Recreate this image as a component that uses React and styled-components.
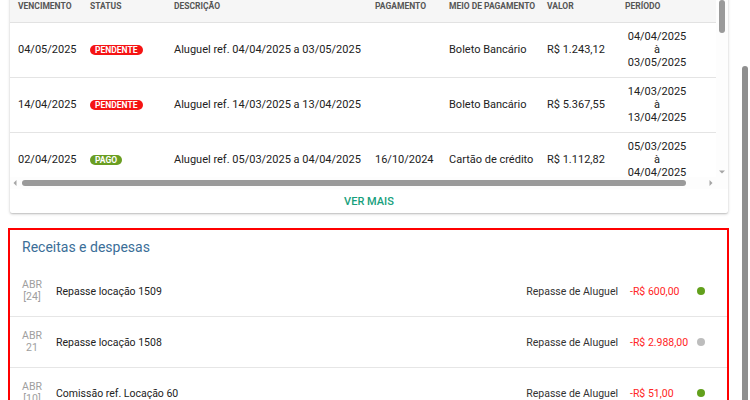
import React, { useLayoutEffect, useRef } from "react";
import styled, { createGlobalStyle } from "styled-components";

const GlobalStyle = createGlobalStyle`
  html, body { margin: 0; padding: 0; height: 100%; background: #ffffff; }
  body { font-family: Roboto, "Noto Sans", Arial, sans-serif; color: #212121; }
  #root { height: 100%; }
  * { box-sizing: border-box; }
`;

const Shell = styled.div`
  display: flex;
  height: 100vh;
  overflow: hidden;
`;

const Viewport = styled.div`
  flex: 1;
  min-width: 0;
  overflow: hidden;
`;

const PageRail = styled.div`
  width: 15px;
  flex: none;
  display: flex;
  flex-direction: column;
  padding: 66px 2px 0 7px;
  background: #fff;
`;

const PageThumb = styled.div`
  flex: 1;
  width: 6px;
  border-radius: 3px 3px 0 0;
  background: #8f8f8f;
`;

const Page = styled.main`
  padding: 0 6px 8px 8px;
  display: flex;
  flex-direction: column;
  gap: 15px;
`;

const Card = styled.section`
  margin: 0 1px 0 2px;
  background: #fff;
  border-radius: 2px;
  box-shadow: 0 1px 3px rgba(0, 0, 0, 0.22), 0 1px 1px rgba(0, 0, 0, 0.08);
`;

const TableFrame = styled.div`
  display: grid;
  grid-template-columns: 1fr 12px;
  grid-template-rows: 187px 12px;
`;

const TableViewport = styled.div`
  overflow: hidden;
`;

const VRail = styled.div`
  display: flex;
  flex-direction: column;
  align-items: center;
  background: #fdfdfd;
`;

const HRail = styled.div`
  display: flex;
  align-items: center;
  background: #fdfdfd;
`;

const Corner = styled.div`
  background: #fdfdfd;
`;

const RailButton = styled.div`
  width: 10px;
  height: 10px;
  flex: none;
  display: flex;
  align-items: center;
  justify-content: center;
`;

const VThumb = styled.div`
  width: 6px;
  height: ${(p) => p.$size}px;
  border-radius: 3px;
  background: #9a9a9a;
`;

const HThumb = styled.div`
  height: 6px;
  width: ${(p) => p.$size}px;
  margin-left: 2px;
  border-radius: 3px;
  background: #9a9a9a;
`;

const RailGap = styled.div`
  flex: 1;
`;

const Table = styled.table`
  width: 725px;
  table-layout: fixed;
  border-collapse: collapse;
  font-size: 11px;
  color: #222;
`;

const HeadCell = styled.th`
  height: 32px;
  padding: 0 8px;
  text-align: left;
  font-size: 8.5px;
  font-weight: 700;
  color: #555;
  text-transform: uppercase;
  white-space: nowrap;
  background: #f6f6f6;
  border-bottom: 1px solid #e2e2e2;
`;

const Cell = styled.td`
  height: 55px;
  padding: 0 8px;
  white-space: nowrap;
  text-align: ${(p) => (p.$center ? "center" : "left")};
  line-height: 13px;
  border-bottom: 1px solid #e4e4e4;
`;

const Badge = styled.span`
  display: inline-block;
  padding: 0 5px;
  height: 10px;
  line-height: 10px;
  border-radius: 6px;
  font-size: 8.5px;
  font-weight: 700;
  color: #fff;
  text-transform: uppercase;
  background: ${(p) => (p.$paid ? "#6a9e22" : "#f51414")};
  vertical-align: middle;
`;

const Footer = styled.div`
  height: 24px;
  display: flex;
  align-items: center;
  justify-content: center;
`;

const MoreLink = styled.a`
  font-size: 11px;
  font-weight: 500;
  color: #17a07c;
  text-decoration: none;
  text-transform: uppercase;
  cursor: pointer;
`;

const Ledger = styled.section`
  border: 2px solid #ff0000;
  background: #fff;
`;

const LedgerTitle = styled.h2`
  margin: 0;
  padding: 7px 12px 8px;
  font-size: 14px;
  line-height: 20px;
  font-weight: 400;
  color: #3b6e98;
`;

const Entry = styled.div`
  height: 51px;
  display: flex;
  align-items: center;
  padding: 0 22px 0 12px;
  border-top: 1px solid ${(p) => (p.$first ? "transparent" : "#e6e6e6")};
  font-size: 10.5px;
`;

const DateBlock = styled.div`
  width: 20px;
  display: flex;
  flex-direction: column;
  align-items: center;
  font-size: 10.5px;
  line-height: 12px;
  color: #9e9e9e;
`;

const EntryText = styled.div`
  flex: 1;
  margin-left: 14px;
  color: #222;
`;

const Category = styled.div`
  color: #333;
`;

const Amount = styled.div`
  width: 62px;
  margin-left: 12px;
  color: #ff2424;
`;

const Dot = styled.span`
  width: 8px;
  height: 8px;
  margin-left: 5px;
  border-radius: 50%;
  background: ${(p) => (p.$done ? "#62a01c" : "#bdbdbd")};
`;

const arrows = {
  up: "2,6.5 8,6.5 5,3.5",
  down: "2,3.5 8,3.5 5,6.5",
  left: "6.5,2 6.5,8 3.5,5",
  right: "3.5,2 3.5,8 6.5,5",
};

function Arrow({ dir }) {
  return (
    <RailButton>
      <svg width="10" height="10" viewBox="0 0 10 10">
        <polygon points={arrows[dir]} fill="#a5a5a5" />
      </svg>
    </RailButton>
  );
}

const rows = [
  ["04/05/2025", false, "Aluguel ref. 04/04/2025 a 03/05/2025", "", "Boleto Bancário", "R$ 1.243,12", "04/04/2025", "03/05/2025"],
  ["14/04/2025", false, "Aluguel ref. 14/03/2025 a 13/04/2025", "", "Boleto Bancário", "R$ 5.367,55", "14/03/2025", "13/04/2025"],
  ["02/04/2025", true, "Aluguel ref. 05/03/2025 a 04/04/2025", "16/10/2024", "Cartão de crédito", "R$ 1.112,82", "05/03/2025", "04/04/2025"],
  ["02/03/2025", true, "Aluguel ref. 05/02/2025 a 04/03/2025", "02/03/2025", "Boleto Bancário", "R$ 1.112,82", "05/02/2025", "04/03/2025"],
  ["02/02/2025", true, "Aluguel ref. 05/01/2025 a 04/02/2025", "01/02/2025", "Boleto Bancário", "R$ 1.112,82", "05/01/2025", "04/02/2025"],
];

const entries = [
  { month: "ABR", day: "[24]", text: "Repasse locação 1509", cat: "Repasse de Aluguel", value: "-R$ 600,00", done: true },
  { month: "ABR", day: "21", text: "Repasse locação 1508", cat: "Repasse de Aluguel", value: "-R$ 2.988,00", done: false },
  { month: "ABR", day: "[10]", text: "Comissão ref. Locação 60", cat: "Repasse de Aluguel", value: "-R$ 51,00", done: true },
];

const widths = [72, 84, 201, 74, 98, 78, 80, 38];
const heads = ["Vencimento", "Status", "Descrição", "Pagamento", "Meio de pagamento", "Valor", "Período", ""];

export default function App() {
  const ref = useRef(null);
  useLayoutEffect(() => {
    if (ref.current) ref.current.scrollTop = 10;
  }, []);

  return (
    <>
      <GlobalStyle />
      <Shell>
        <Viewport ref={ref}>
          <Page>
            <Card>
              <TableFrame>
                <TableViewport>
                  <Table>
                    <colgroup>
                      {widths.map((w, i) => (
                        <col key={i} style={{ width: w }} />
                      ))}
                    </colgroup>
                    <thead>
                      <tr>
                        {heads.map((h, i) => (
                          <HeadCell key={i}>{h}</HeadCell>
                        ))}
                      </tr>
                    </thead>
                    <tbody>
                      {rows.map((r, i) => (
                        <tr key={i}>
                          <Cell>{r[0]}</Cell>
                          <Cell>
                            <Badge $paid={r[1]}>{r[1] ? "Pago" : "Pendente"}</Badge>
                          </Cell>
                          <Cell>{r[2]}</Cell>
                          <Cell>{r[3]}</Cell>
                          <Cell>{r[4]}</Cell>
                          <Cell>{r[5]}</Cell>
                          <Cell $center>
                            {r[6]}
                            <br />à<br />
                            {r[7]}
                          </Cell>
                          <Cell />
                        </tr>
                      ))}
                    </tbody>
                  </Table>
                </TableViewport>
                <VRail>
                  <Arrow dir="up" />
                  <VThumb $size={33} />
                  <RailGap />
                  <Arrow dir="down" />
                </VRail>
                <HRail>
                  <Arrow dir="left" />
                  <HThumb $size={664} />
                  <RailGap />
                  <Arrow dir="right" />
                </HRail>
                <Corner />
              </TableFrame>
              <Footer>
                <MoreLink>Ver mais</MoreLink>
              </Footer>
            </Card>
            <Ledger>
              <LedgerTitle>Receitas e despesas</LedgerTitle>
              {entries.map((e, i) => (
                <Entry key={i} $first={i === 0}>
                  <DateBlock>
                    <span>{e.month}</span>
                    <span>{e.day}</span>
                  </DateBlock>
                  <EntryText>{e.text}</EntryText>
                  <Category>{e.cat}</Category>
                  <Amount>{e.value}</Amount>
                  <Dot $done={e.done} />
                </Entry>
              ))}
            </Ledger>
          </Page>
        </Viewport>
        <PageRail>
          <PageThumb />
        </PageRail>
      </Shell>
    </>
  );
}
